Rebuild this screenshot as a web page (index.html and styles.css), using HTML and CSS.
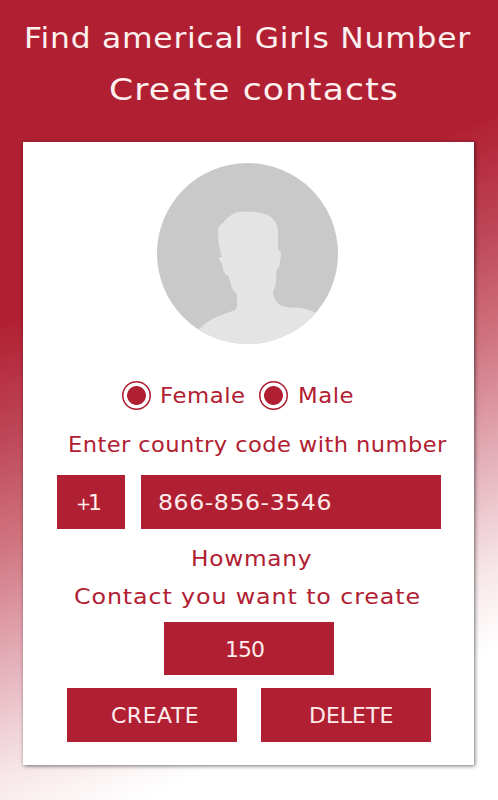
FILE: index.html
```
<!DOCTYPE html>
<html lang="en">
	<head>
		<meta charset="utf-8">
		<title>Create contacts</title>
		<link rel="stylesheet" href="styles.css">
	</head>

	<body>
		<div class="header">
			<div class="title">Find americal Girls Number</div>
			<div class="subtitle">Create contacts</div>
		</div>
		<div class="card">
			<svg class="avatar" viewBox="0 0 181 181">
				<defs>
					<clipPath id="face"><circle cx="90.5" cy="90.5" r="90.5"/></clipPath>
				</defs>
				<circle cx="90.5" cy="90.5" r="90.5" fill="#c9c9c9"/>
				<path clip-path="url(#face)" fill="#e4e4e4" d="M30 181V175L42 166C50 158 58 154 70 150C76 148 80 147 80 142V131C76 129 74 123 73 118C72 113 71 112 69 112C66 108 65 102 65 100C63 99 62 96 62 94L65 94C62 86 61 76 61 69C61 64 63 61 66 60C69 55 75 51 81 49C89 48 99 48 108 51C115 53 121 60 121 68V87C124 87 124 90 124 92C123 99 123 105 120 106C119 111 119 115 119 120C118 126 116 126 116 130C117 136 120 141 125 143C133 146 142 143 152 147C159 149 168 154 181 166V181Z"/>
			</svg>
			<div class="gender">
				<label class="option"><span class="radio"></span><span class="female">Female</span></label>
				<label class="option"><span class="radio"></span><span class="male">Male</span></label>
			</div>
			<div class="label code-label">Enter country code with number</div>
			<div class="phone">
				<div class="field code"><span>+</span>1</div>
				<div class="field number"><span class="wide">866-856-3546</span></div>
			</div>
			<div class="label howmany">Howmany</div>
			<div class="label want">Contact you want to create</div>
			<div class="field amount">150</div>
			<div class="buttons">
				<div class="field button create">CREATE</div>
				<div class="field button delete">DELETE</div>
			</div>
		</div>
	</body>
</html>
```
FILE: styles.css
```
*{
	margin: 0;
	padding: 0;
	box-sizing: border-box;
}
html{
	height: 100%;
}
body{
	height: 800px;
	overflow: hidden;
	font-family: "DejaVu Sans", sans-serif;
	font-size: 21.5px;
	color: #b12032;
	background: linear-gradient(157deg, #b12032 32%, #bd4555 43%, #d0747f 54%, #e6b5bf 67%, #f7e7e9 77%, #fff 85%);
}
.header{
	height: 142px;
	padding-top: 12px;
	color: #fff0f0;
	white-space: nowrap;
}
/* stretched lettering */
.title, .subtitle, .label, .female, .male, .wide{
	transform-origin: 0 50%;
}
.title{
	width: 430px;
	margin-left: 24px;
	font-size: 29px;
	line-height: 52px;
	letter-spacing: 0.7px;
	transform: scaleX(1.082);
}
.subtitle{
	width: 300px;
	margin-left: 109px;
	font-size: 31px;
	line-height: 51px;
	letter-spacing: 1px;
	transform: scaleX(1.115);
}
.card{
	width: 451px;
	height: 623px;
	margin-left: 23px;
	padding-top: 21px;
	background: #fff;
	box-shadow: 1px 1px 4px rgba(0,0,0,0.55);
	white-space: nowrap;
}
.avatar{
	display: block;
	width: 181px;
	height: 181px;
	margin-left: 134px;
}
.gender{
	display: flex;
	height: 30px;
	margin: 37px 0 0 99px;
	line-height: 30px;
	letter-spacing: 0.5px;
}
.option{
	display: flex;
	width: 137px;
}
.radio{
	width: 29px;
	height: 29px;
	border-radius: 50%;
	background: radial-gradient(circle, #b12032 9px, #fff 9.8px, #fff 12.6px, #b12032 13.3px);
}
.female{
	margin-left: 9px;
	transform: scaleX(1.06);
}
.male{
	margin-left: 10px;
	transform: scaleX(1.06);
}
.code-label{
	width: 376px;
	margin: 19px 0 15px 45px;
	line-height: 30px;
	letter-spacing: 0.4px;
	transform: scaleX(1.05);
}
.phone{
	display: flex;
	gap: 16px;
	margin-left: 34px;
}
.field{
	height: 54px;
	background: #b12032;
	color: #ffecec;
	font-size: 22px;
	line-height: 56px;
}
.code{
	width: 67.5px;
	padding-left: 19px;
}
.code span{
	font-size: 18px;
	letter-spacing: -3px;
}
.number{
	width: 300.5px;
	padding-left: 17px;
}
.wide{
	display: inline-block;
	letter-spacing: 0.5px;
	transform: scaleX(1.075);
}
.howmany{
	width: 120px;
	margin: 11px 0 0 168px;
	line-height: 38px;
	letter-spacing: 0.7px;
	transform: scaleX(1.08);
}
.want{
	width: 340px;
	margin-left: 51px;
	line-height: 38px;
	letter-spacing: 0.8px;
	transform: scaleX(1.105);
}
.amount{
	width: 170px;
	height: 53px;
	margin: 6px 0 13px 141px;
	padding-left: 61px;
	letter-spacing: -1px;
}
.buttons{
	display: flex;
	gap: 24px;
	margin-left: 44px;
}
.button{
	width: 170px;
}
.create{
	padding-left: 44px;
	letter-spacing: 0.5px;
}
.delete{
	padding-left: 48px;
}
```
